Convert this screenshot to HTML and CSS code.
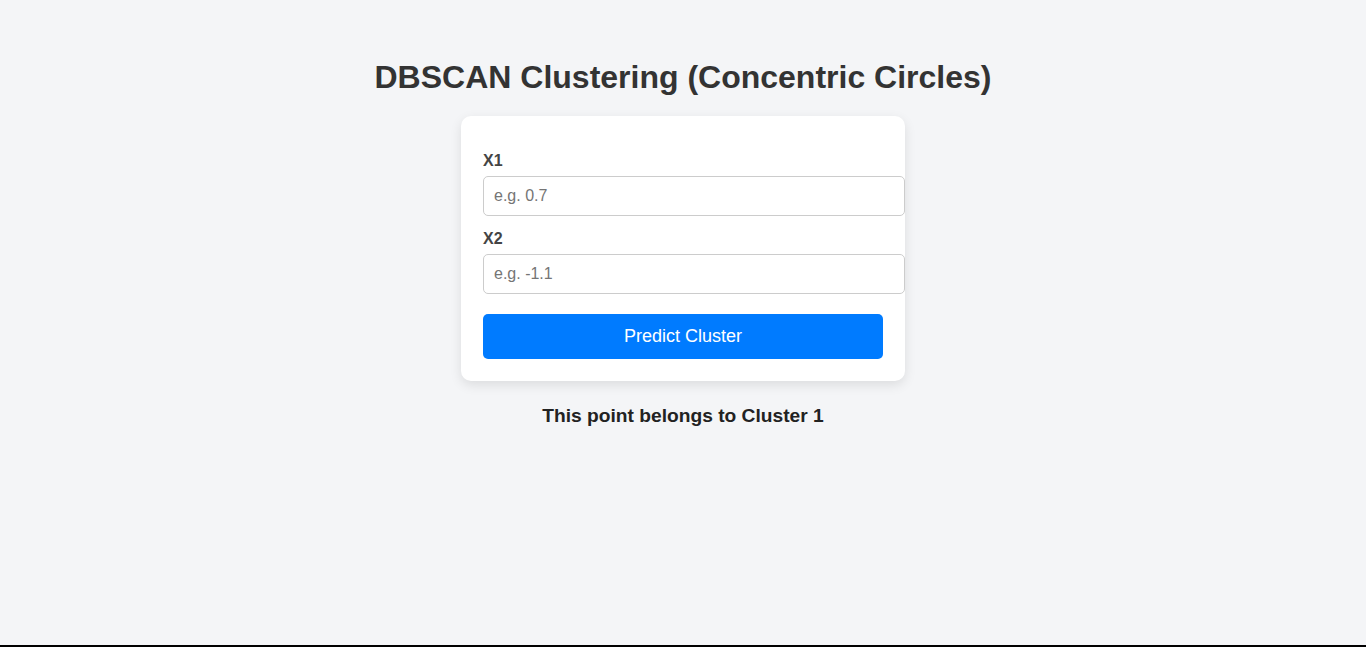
FILE: index.html
```html
<!DOCTYPE html>
<html lang="en">
<head>
<meta charset="utf-8">
<title>DBSCAN Clustering</title>
<link rel="stylesheet" href="styles.css">
</head>
<body>
<div class="page">
  <h1 class="title">DBSCAN Clustering (Concentric Circles)</h1>
  <form class="card">
    <label class="field-label" for="x1">X1</label>
    <input class="field-input" id="x1" type="text" placeholder="e.g. 0.7">
    <label class="field-label" for="x2">X2</label>
    <input class="field-input" id="x2" type="text" placeholder="e.g. -1.1">
    <button class="submit" type="button">Predict Cluster</button>
  </form>
  <p class="result">This point belongs to Cluster 1</p>
</div>
</body>
</html>
```

FILE: styles.css
```css
html, body {
  margin: 0;
  padding: 0;
}
body {
  background: #f4f5f7;
  font-family: "Liberation Sans", Arial, sans-serif;
}
.page {
  box-sizing: border-box;
  min-height: 100vh;
  padding-top: 59px;
  border-bottom: 2px solid #000;
  display: flex;
  flex-direction: column;
  align-items: center;
}
.title {
  margin: 0 0 20px;
  font-size: 32px;
  font-weight: bold;
  color: #333;
  line-height: 37px;
}
.card {
  width: 400px;
  padding: 22px;
  background: #fff;
  border-radius: 10px;
  box-shadow: 0 4px 12px rgba(0, 0, 0, 0.1);
  display: flex;
  flex-direction: column;
  align-items: flex-start;
}
.field-label {
  display: block;
  margin: 14px 0 6px;
  font-size: 16px;
  line-height: 18px;
  font-weight: bold;
  color: #444;
}
.field-input {
  width: 400px;
  padding: 10px;
  border: 1px solid #ccc;
  border-radius: 5px;
  font-family: "Liberation Sans", Arial, sans-serif;
  font-size: 16px;
  line-height: 18px;
  color: #333;
  background: #fff;
  outline: none;
}
.field-input::placeholder {
  color: #757575;
}
.submit {
  margin-top: 20px;
  width: 400px;
  height: 45px;
  border: none;
  border-radius: 5px;
  background: #007bff;
  color: #fff;
  font-family: "Liberation Sans", Arial, sans-serif;
  font-size: 18px;
  cursor: pointer;
}
.result {
  margin: 24px 0 0;
  font-size: 19.2px;
  line-height: 22px;
  font-weight: bold;
  color: #222;
}
```
